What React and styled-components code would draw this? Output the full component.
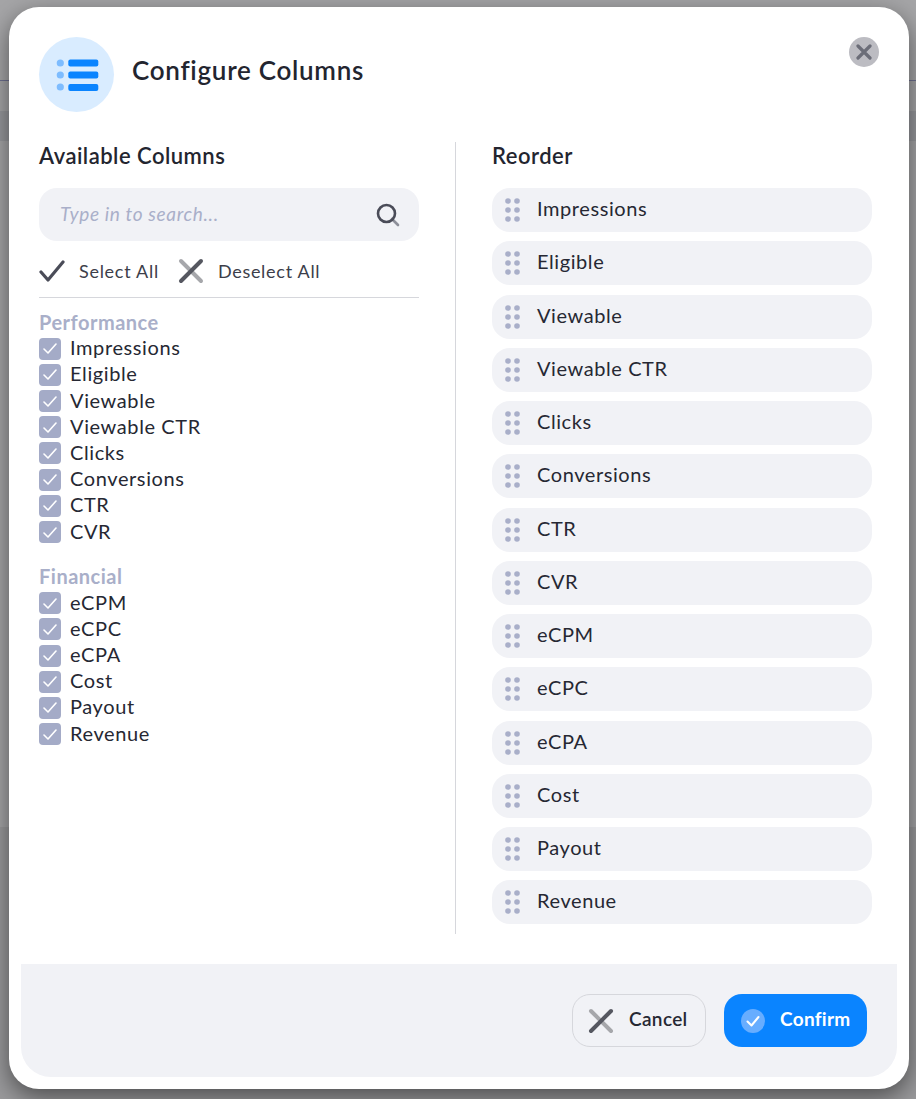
import React from "react";
import styled, { createGlobalStyle } from "styled-components";

const Global = createGlobalStyle`
  html, body { margin: 0; padding: 0; }
  body { font-family: "Lato", "Liberation Sans", sans-serif; color: #262833; }
  * { box-sizing: border-box; }
`;

const Backdrop = styled.div`
  width: 916px;
  height: 1099px;
  background: linear-gradient(
    #a5a5a7 0,
    #a5a5a7 80px,
    #6e7090 80px,
    #6e7090 81px,
    #a5a5a7 81px,
    #a5a5a7 111px,
    #97989c 111px,
    #97989c 141px,
    #a5a5a7 141px,
    #a5a5a7 827px,
    #9a9a9c 827px,
    #9a9a9c 1099px
  );
  padding: 7px 7px 10px 9px;
  overflow: hidden;
`;

const Modal = styled.div`
  position: relative;
  width: 900px;
  height: 1082px;
  background: #fff;
  border-radius: 30px;
  padding: 12px;
  display: flex;
  flex-direction: column;
  box-shadow: 0 8px 24px rgba(0, 0, 0, 0.5);
`;

const Header = styled.div`
  display: flex;
  align-items: center;
  gap: 18px;
  padding: 18px 18px 0;
  height: 93px;
`;

const IconCircle = styled.div`
  width: 75px;
  height: 75px;
  border-radius: 50%;
  background: #d9ecff;
  display: flex;
  align-items: center;
  justify-content: center;
`;

const Title = styled.h1`
  margin: 0 0 10px;
  font-size: 26px;
  font-weight: 600;
  letter-spacing: 0.72px;
  color: #23252f;
`;

const CloseButton = styled.button`
  position: absolute;
  top: 30px;
  right: 30px;
  width: 30px;
  height: 30px;
  padding: 0;
  border: 0;
  border-radius: 50%;
  background: #bcbcc2;
  display: flex;
  align-items: center;
  justify-content: center;
`;

const Body = styled.div`
  display: flex;
  padding: 30px 18px 0;
  height: 852px;
`;

const LeftColumn = styled.div`
  width: 417px;
  padding-right: 36px;
  height: 792px;
  border-right: 1px solid #d6d7dc;
`;

const RightColumn = styled.div`
  padding-left: 36px;
  width: 416px;
`;

const SectionTitle = styled.h2`
  margin: 0;
  height: 28px;
  line-height: 28px;
  font-size: 22px;
  font-weight: 600;
  letter-spacing: 0.48px;
  color: #23252f;
`;

const SearchBox = styled.div`
  margin-top: 18px;
  height: 53px;
  border-radius: 18px;
  background: #f1f2f6;
  display: flex;
  align-items: center;
  justify-content: space-between;
  padding: 0 19px 0 21px;
`;

const Placeholder = styled.span`
  font-size: 19px;
  font-style: italic;
  letter-spacing: 0.65px;
  margin-bottom: 2px;
  color: #a9afc9;
`;

const BulkActions = styled.div`
  display: flex;
  align-items: center;
  height: 57px;
  padding-top: 3px;
  border-bottom: 1px solid #d6d7dc;
`;

const BulkLabel = styled.span`
  font-size: 18px;
  letter-spacing: 0.72px;
  color: #3c3e4a;
  margin: 0 19px 0 14px;
`;

const GroupTitle = styled.div`
  font-size: 20px;
  font-weight: 700;
  letter-spacing: 0.5px;
  color: #a9afc9;
  height: 26px;
  line-height: 26px;
  margin-top: ${(p) => p.$top}px;
  margin-bottom: ${(p) => p.$after}px;
`;

const CheckRow = styled.div`
  display: flex;
  align-items: center;
  gap: 9px;
  height: 26.2px;
  font-size: 20px;
  letter-spacing: 0.6px;
  color: #262833;
`;

const CheckBox = styled.span`
  width: 22px;
  height: 22px;
  margin-top: 3px;
  border-radius: 4px;
  background: #a4abc7;
  display: flex;
  align-items: center;
  justify-content: center;
`;

const ReorderList = styled.div`
  margin-top: 18px;
  display: flex;
  flex-direction: column;
  gap: 9.25px;
`;

const ReorderItem = styled.div`
  height: 44px;
  border-radius: 18px;
  background: #f1f2f6;
  display: flex;
  align-items: center;
  gap: 16px;
  padding: 0 13px 4px;
  font-size: 20px;
  letter-spacing: 0.58px;
  color: #262833;
`;

const GripIcon = styled.svg`
  margin-top: 4px;
`;

const Footer = styled.div`
  height: 113px;
  background: #f1f2f6;
  border-radius: 0 0 30px 30px;
  display: flex;
  align-items: center;
  justify-content: flex-end;
  gap: 18px;
  padding: 0 30px 0 0;
`;

const CancelButton = styled.button`
  height: 53px;
  width: 134px;
  border: 1px solid #d6d7dc;
  border-radius: 18px;
  background: transparent;
  display: flex;
  align-items: center;
  gap: 15px;
  padding: 0 0 0 15px;
  font: 600 19px "Lato", sans-serif;
  letter-spacing: 0.35px;
  color: #262833;
`;

const ConfirmButton = styled.button`
  height: 53px;
  width: 143px;
  border: 0;
  border-radius: 18px;
  background: #0a84ff;
  display: flex;
  align-items: center;
  gap: 15px;
  padding: 0 0 0 17px;
  font: 700 19px "Lato", sans-serif;
  letter-spacing: 0.3px;
  color: #fff;
`;

const ButtonLabel = styled.span`
  margin-bottom: 5px;
`;

const ListIcon = () => (
  <svg width="44" height="34" viewBox="-1.3 0 44 34">
    <circle cx="4" cy="5" r="3.6" fill="#7dbcff" />
    <circle cx="4" cy="17" r="3.6" fill="#7dbcff" />
    <circle cx="4" cy="29" r="3.6" fill="#7dbcff" />
    <rect x="12" y="1.5" width="30" height="7" rx="2" fill="#0a84ff" />
    <rect x="12" y="13.5" width="30" height="7" rx="2" fill="#0a84ff" />
    <rect x="12" y="26" width="30" height="7" rx="2" fill="#0a84ff" />
  </svg>
);

const CrossIcon = () => (
  <svg width="26" height="26" viewBox="0 0 26 26" strokeWidth="4" strokeLinecap="round">
    <path d="M3 3 L23 23" stroke="#a6a7ab" />
    <path d="M23 3 L3 23" stroke="#555760" />
  </svg>
);

const TickIcon = () => (
  <svg width="26" height="22" viewBox="0 0 26 22" fill="none" stroke="#4a4c58" strokeWidth="3.2" strokeLinecap="round" strokeLinejoin="round">
    <path d="M2 12 L9 20 L24 2" />
  </svg>
);

const SmallTick = () => (
  <svg width="14" height="11" viewBox="0 0 14 11" fill="none" stroke="#fff" strokeWidth="1.6" strokeLinecap="round" strokeLinejoin="round">
    <path d="M1 6 L5 10 L13 1" />
  </svg>
);

const Grip = () => (
  <GripIcon width="16" height="26" viewBox="0 0 16 26" fill="#a9afc9">
    {[4, 13, 22].map((y) => (
      <React.Fragment key={y}>
        <circle cx="3" cy={y} r="2.8" />
        <circle cx="12" cy={y} r="2.8" />
      </React.Fragment>
    ))}
  </GripIcon>
);

const performance = ["Impressions", "Eligible", "Viewable", "Viewable CTR", "Clicks", "Conversions", "CTR", "CVR"];
const financial = ["eCPM", "eCPC", "eCPA", "Cost", "Payout", "Revenue"];

const Check = ({ label }) => (
  <CheckRow>
    <CheckBox><SmallTick /></CheckBox>
    {label}
  </CheckRow>
);

export default function App() {
  return (
    <>
      <Global />
      <Backdrop>
        <Modal>
          <Header>
            <IconCircle><ListIcon /></IconCircle>
            <Title>Configure Columns</Title>
          </Header>
          <CloseButton aria-label="Close">
            <svg width="16" height="16" viewBox="0 0 16 16" stroke="#6b6d78" strokeWidth="3.2" strokeLinecap="round">
              <path d="M2 2 L14 14 M14 2 L2 14" />
            </svg>
          </CloseButton>
          <Body>
            <LeftColumn>
              <SectionTitle>Available Columns</SectionTitle>
              <SearchBox>
                <Placeholder>Type in to search...</Placeholder>
                <svg width="24" height="24" viewBox="0 0 24 24" fill="none" strokeWidth="2.6" strokeLinecap="round">
                  <path d="M16 16 L22 22" stroke="#8e909a" />
                  <circle cx="10.5" cy="10.5" r="8.5" stroke="#4a4c58" />
                </svg>
              </SearchBox>
              <BulkActions>
                <TickIcon />
                <BulkLabel>Select All</BulkLabel>
                <CrossIcon />
                <BulkLabel>Deselect All</BulkLabel>
              </BulkActions>
              <GroupTitle $top={11} $after={-0.9}>Performance</GroupTitle>
              {performance.map((l) => <Check key={l} label={l} />)}
              <GroupTitle $top={19} $after={0}>Financial</GroupTitle>
              {financial.map((l) => <Check key={l} label={l} />)}
            </LeftColumn>
            <RightColumn>
              <SectionTitle>Reorder</SectionTitle>
              <ReorderList>
                {[...performance, ...financial].map((l) => (
                  <ReorderItem key={l}><Grip />{l}</ReorderItem>
                ))}
              </ReorderList>
            </RightColumn>
          </Body>
          <Footer>
            <CancelButton><CrossIcon /><ButtonLabel>Cancel</ButtonLabel></CancelButton>
            <ConfirmButton>
              <svg width="24" height="24" viewBox="0 0 24 24" fill="none">
                <circle cx="12" cy="12" r="12" fill="#67adff" />
                <path d="M6.5 12.5 L10.5 16.5 L17.5 8" stroke="#fff" strokeWidth="2" strokeLinecap="round" strokeLinejoin="round" />
              </svg>
              <ButtonLabel>Confirm</ButtonLabel>
            </ConfirmButton>
          </Footer>
        </Modal>
      </Backdrop>
    </>
  );
}
